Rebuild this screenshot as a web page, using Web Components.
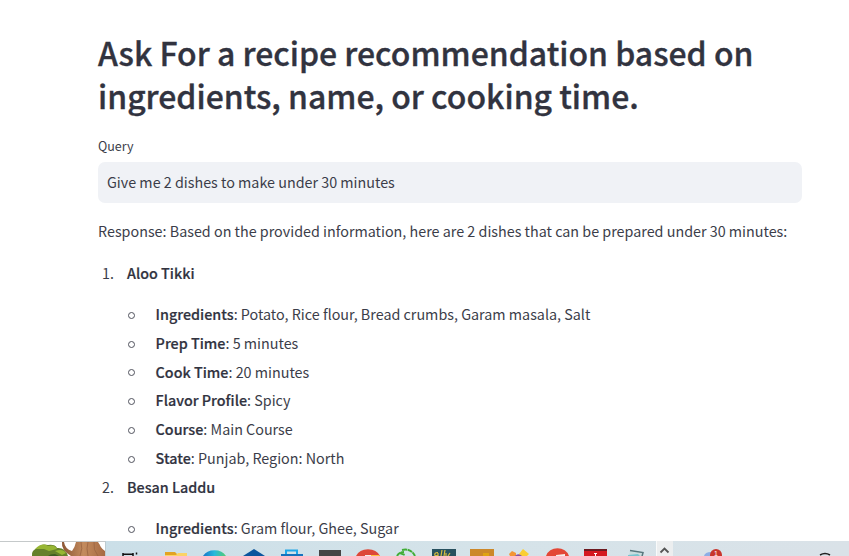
<!DOCTYPE html>
<html lang="en"><head><meta charset="utf-8"><title>Recipe recommendation</title>
<style>
body{margin:0;background:#fff;color:#3b3d49;font-family:"Noto Sans CJK SC","Noto Sans",sans-serif;font-size:14.34px;overflow:hidden}
</style></head><body>
<recipe-app></recipe-app>
<script>
const define=(name,html)=>customElements.define(name,class extends HTMLElement{
  constructor(){super();this.attachShadow({mode:'open'}).innerHTML=html;}
});
define('page-title',`<style>:host{display:block}h1{margin:0;color:#31333f;font-size:31.95px;line-height:43.2px;font-weight:500;white-space:nowrap;-webkit-text-stroke:.35px #31333f}</style><h1><slot></slot></h1>`);
define('query-field',`<style>:host{display:block}label{display:block;font-size:12.5px;line-height:20px}
.box{margin-top:6px;height:41px;box-sizing:border-box;padding:0 9px 2px;border-radius:7px;background:#f0f2f6;display:flex;align-items:center;line-height:20px}</style><label><slot name="label"></slot></label><div class="box"><slot></slot></div>`);
define('dish-item',`<style>:host{display:block}.head{display:flex;line-height:28.8px}.num{width:16px;text-align:right;margin-right:13px}b{color:#31333f;font-weight:500;-webkit-text-stroke:.2px #31333f}.facts{padding-top:12.6px}</style>
<div class="head"><span class="num"><slot name="number"></slot></span><b><slot name="name"></slot></b></div><div class="facts"><slot></slot></div>`);
define('dish-fact',`<style>:host{display:flex;align-items:center;line-height:28.8px;height:28.8px;padding-left:30px;white-space:nowrap}i{box-sizing:border-box;width:7px;height:7px;border:1.3px solid #50525d;border-radius:50%;margin-right:20.6px;position:relative;top:1px}::slotted(b){color:#31333f;font-weight:500;-webkit-text-stroke:.2px #31333f}</style><i></i><span><slot></slot></span>`);
define('task-bar',`<style>:host{display:block;height:15px}svg{display:block}</style>
<svg width="849" height="15" viewBox="0 0 849 15">
<defs><linearGradient id="sky"><stop stop-color="#cbdfe8"/><stop offset=".5" stop-color="#d5e3e9"/><stop offset="1" stop-color="#dae2e8"/></linearGradient>
<linearGradient id="bark"><stop stop-color="#8b5534"/><stop offset=".5" stop-color="#c38b5e"/><stop offset="1" stop-color="#a66a43"/></linearGradient>
<linearGradient id="edge"><stop stop-color="#1675c8"/><stop offset=".5" stop-color="#27b9db"/><stop offset="1" stop-color="#55cc72"/></linearGradient></defs>
<path fill="url(#sky)" d="M105 0h744v15H105z"/><path fill="#fff" d="M0 0h105v15H0z"/><path fill="#c5c9ca" d="M0 0h106v1H0z"/><path fill="#bdcbd0" d="M105 0h1v15h-1z"/>
<path fill="#65802a" d="M32 15q-1-6 6-8 3-5 10-3 7-1 9 3 8-1 11 8z"/><path fill="#97b634" d="M35 8q7-7 13-3 7-2 9 3l-8 2-5-2zM55 10q8-3 11 2l-4 2z"/><path fill="#3d5c22" d="M48 15q2-2 7-2l4 2z"/>
<path fill="url(#bark)" d="M62 1h2q1 7 8 9 3-4 4-9h23q1 6 6 9v5H71Q61 9 62 1z"/><path d="M81 1q2 6-1 14M88 1q-2 6 0 14M94 1q-1 8 4 14" fill="none" stroke="#9a6542" stroke-width=".8"/><path fill="#fff" d="M98 1h7v3q-5 1-7-3z"/>
<path stroke="#111" stroke-width="1.500" fill="none" d="M123 12v3M123 13.200h10M133 12v3M136.500 11.500v2"/>
<path fill="#e2a323" d="M165 11h10l2 2h9v2h-21z"/><path fill="#fbd366" d="M165 14h11l2-2h9v3h-22z"/>
<path fill="url(#edge)" d="M203 15a13 11 0 0 1 23 0z"/><path fill="#0b559d" d="M243 15l11-7 11 7z"/>
<path fill="#1673bd" d="M281 13h22v2h-22z"/><path fill="none" stroke="#20a7e8" stroke-width="2" d="M286 13V9.500h11V13"/>
<path fill="#454545" d="M319 9h22v6h-22z"/><path fill="#dd4838" d="M356 15a13 11 0 0 1 24 0z"/><path fill="#ffc33c" d="M370 14h9l1 1h-11z"/><path fill="#f2ede8" d="M365 14h6v1h-6z"/>
<path fill="none" stroke="#42ad36" stroke-width="2" stroke-dasharray="5 .6" d="M397 15q2-4 7-4M402 9q9-2 13 6M400 12l5 2"/>
<path fill="#28515f" d="M432 8h24v7h-24z"/><path fill="none" stroke="#d8bd3f" stroke-width="1.200" d="M438 11.500q-4 0-3 3h3M438 12v3M442 9l-1 6M445 9l-1 6M446 12v3M450 12l-2 3"/>
<path fill="#cc8829" d="M470 8h24v7h-24z"/><path fill="#e0a312" d="M483 12h6v3h-6z"/><path fill="#f39535" d="M509 13l3-3 4 2v3h-6z"/><path fill="#fbce32" d="M519 13l4-5 6 5-2 2h-7z"/><path fill="#8952a4" d="M516 14q3-2 6 1h-7z"/>
<path fill="#e34736" d="M546 15a12 11 0 0 1 23 0z"/><path fill="#f3eee9" d="M556 14l9-1v2h-9z"/>
<path fill="#d51920" d="M584 9h23v6h-23z"/><path fill="#6e1a20" d="M584 8h23v2h-23z"/><path stroke="#fff" d="M594 12.500h3M595.500 12v3"/>
<path fill="#c8dedf" d="M630 10l14 2-2 3h-13z"/><path stroke="#59777d" stroke-width="1.500" fill="none" d="M630 9.500l13 2-1 4"/><path fill="#79c5cf" d="M628 14l10-1 2 2h-12z"/>
<path fill="#f9fafa" d="M656 0h1v15h-1z"/><path fill="#eceeef" d="M657 0h16v15h-16z"/><path fill="none" stroke="#555" stroke-width="1.800" d="M660.500 11.500l4-4 4 4"/>
<path fill="#8eaee5" d="M704 15q1-4 7-4v4z"/><circle cx="716" cy="14" r="6" fill="#c8352d"/><text x="714" y="14.500" font-family="Liberation Sans" font-size="7" fill="#fff">1</text>
<path stroke="#222" fill="none" stroke-width="1.500" d="M820 14q5-3 10 0"/></svg>`);
define('recipe-app',`<style>:host{display:flex;flex-direction:column;height:556px;overflow:hidden}main{flex:1;min-height:0;overflow:hidden;padding:31px 47px 0 98px}query-field{margin-top:19px}p{margin:14px 0 12.4px;line-height:28.8px;white-space:nowrap}</style>
<main><page-title>Ask For a recipe recommendation based on<br>ingredients, name, or cooking time.</page-title>
<query-field><span slot="label">Query</span><span>Give me 2 dishes to make under 30 minutes</span></query-field>
<p>Response: Based on the provided information, here are 2 dishes that can be prepared under 30 minutes:</p>
<dish-item><span slot="number">1.</span><span slot="name">Aloo Tikki</span>
<dish-fact><b>Ingredients</b>: Potato, Rice flour, Bread crumbs, Garam masala, Salt</dish-fact>
<dish-fact><b>Prep Time</b>: 5 minutes</dish-fact><dish-fact><b>Cook Time</b>: 20 minutes</dish-fact><dish-fact><b>Flavor Profile</b>: Spicy</dish-fact><dish-fact><b>Course</b>: Main Course</dish-fact><dish-fact><b>State</b>: Punjab, Region: North</dish-fact></dish-item>
<dish-item><span slot="number">2.</span><span slot="name">Besan Laddu</span><dish-fact><b>Ingredients</b>: Gram flour, Ghee, Sugar</dish-fact></dish-item></main><task-bar></task-bar>`);
</script></body></html>
